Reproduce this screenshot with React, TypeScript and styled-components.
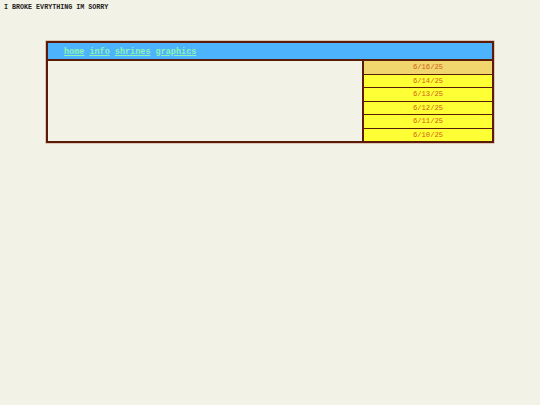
import styled, { createGlobalStyle } from "styled-components"

const GlobalStyle = createGlobalStyle`
  html, body {
    margin: 0;
    padding: 0;
    background: #f3f2e7;
  }
  body {
    font-family: "Liberation Mono", "Courier New", monospace;
  }
`

const links = ["home", "info", "shrines", "graphics"]
const dates = ["6/16/25", "6/14/25", "6/13/25", "6/12/25", "6/11/25", "6/10/25"]

export default function App() {
  return (
    <>
      <GlobalStyle />
      <SPage>
        <STitle>I BROKE EVRYTHING IM SORRY</STitle>
        <SBox>
          <SNav>
            {links.map((l) => (
              <SNavLink href="#" key={l}>{l}</SNavLink>
            ))}
          </SNav>
          <SBody>
            <SMain />
            <SSide>
              {dates.map((d, i) => (
                <SDate key={d} $current={i === 0}>{d}</SDate>
              ))}
            </SSide>
          </SBody>
        </SBox>
      </SPage>
    </>
  )
}

const SPage = styled.div`
  padding: 3px 4px;
`

const STitle = styled.div`
  font-size: 6.7px;
  line-height: 8px;
  font-weight: bold;
  color: #222;
`

const SBox = styled.div`
  box-sizing: border-box;
  width: 448px;
  margin: 30px auto 0;
  border: 2px solid #5a1c08;
  box-shadow: 0 0 0 0.5px #c89a80;
`

const SNav = styled.nav`
  display: flex;
  gap: 5px;
  align-items: center;
  height: 18px;
  padding-left: 16px;
  padding-top: 1px;
  box-sizing: border-box;
  background: #4db3fd;
  border-bottom: 2px solid #5a1c08;
`

const SNavLink = styled.a`
  font-size: 8.5px;
  font-weight: bold;
  color: #8ef2b4;
  text-decoration: underline;
`

const SBody = styled.div`
  display: flex;
`

const SMain = styled.div`
  flex: 1;
  background: #f3f2e7;
`

const SSide = styled.div`
  width: 128px;
  border-left: 2px solid #5a1c08;
  display: flex;
  flex-direction: column;
`

const SDate = styled.div<{ $current?: boolean }>`
  height: 12.5px;
  line-height: 12.5px;
  text-align: center;
  font-size: 7.2px;
  color: #d0601c;
  background: ${(p) => (p.$current ? "#f0d66c" : "#ffff35")};
  border-bottom: 1px solid #5a1c08;
  &:last-child {
    border-bottom: none;
  }
`
